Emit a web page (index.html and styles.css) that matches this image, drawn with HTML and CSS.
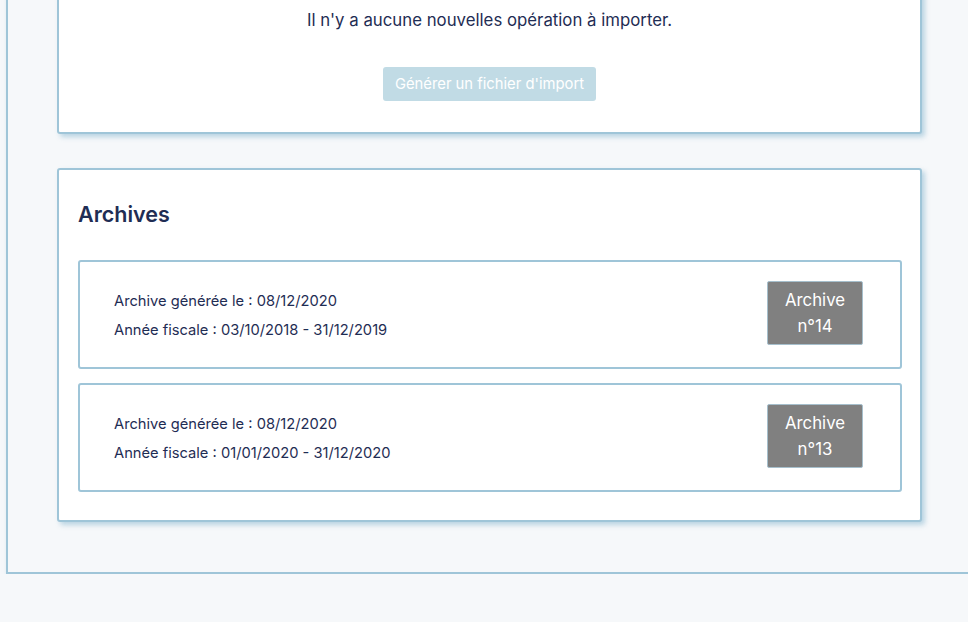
FILE: index.html
```html
<!DOCTYPE html>
<html lang="fr">
<head>
<meta charset="utf-8">
<title>Import</title>
<link rel="stylesheet" href="styles.css">
</head>
<body>
<div class="page">
  <section class="card card-import">
    <p class="empty">Il n'y a aucune nouvelles opération à importer.</p>
    <div class="actions">
      <button class="btn-import" disabled>Générer un fichier d'import</button>
    </div>
  </section>

  <section class="card card-archives">
    <h2 class="title">Archives</h2>
    <div class="archive-list">
      <div class="archive">
        <div class="archive-info">
          <p>Archive générée le : 08/12/2020</p>
          <p>Année fiscale : 03/10/2018 - 31/12/2019</p>
        </div>
        <div class="badge">Archive<br>n°14</div>
      </div>
      <div class="archive">
        <div class="archive-info">
          <p>Archive générée le : 08/12/2020</p>
          <p>Année fiscale : 01/01/2020 - 31/12/2020</p>
        </div>
        <div class="badge">Archive<br>n°13</div>
      </div>
    </div>
  </section>
</div>
</body>
</html>
```

FILE: styles.css
```css
html, body {
  margin: 0;
  padding: 0;
  background: #f6f8fa;
  overflow: hidden;
}
body {
  font-family: Inter, "Liberation Sans", sans-serif;
  color: #1f2d54;
}
.page {
  margin: -60px -12px 0 6px;
  border: 2px solid #9fc5d8;
  border-top: none;
  box-shadow: 2px 3px 5px rgba(159, 197, 216, 0.6);
  padding: 0 56px 50px 49px;
  display: flex;
  flex-direction: column;
  gap: 34px;
}
.card {
  background: #fff;
  border: 2px solid #9fc5d8;
  border-radius: 3px;
  box-shadow: 3px 3px 5px rgba(159, 197, 216, 0.7);
}
.card-import {
  border-top: none;
  padding: 69px 20px 31px;
  text-align: center;
}
.empty {
  margin: 0;
  font-size: 16.8px;
  line-height: 22px;
}
.actions {
  margin-top: 36px;
  display: flex;
  justify-content: center;
}
.btn-import {
  font-family: inherit;
  font-size: 14.8px;
  color: #fff;
  background: #c1dbe5;
  border: none;
  border-radius: 3px;
  padding: 0 12px;
  height: 34px;
  white-space: nowrap;
}
.card-archives {
  padding: 28px 18px 28px 19px;
}
.title {
  margin: 0 0 30px 0;
  font-size: 21.5px;
  font-weight: 600;
  line-height: 32px;
}
.archive-list {
  display: flex;
  flex-direction: column;
  gap: 14px;
}
.archive {
  border: 2px solid #9fc5d8;
  border-radius: 3px;
  padding: 19px 37px 22px 34px;
  display: flex;
  justify-content: space-between;
  align-items: center;
}
.archive-info {
  padding-top: 6px;
}
.archive-info p {
  margin: 0;
  font-size: 14.7px;
  line-height: 29px;
}
.badge {
  width: 94px;
  background: #808080;
  border: 1px solid #a6bfcc;
  border-radius: 2px;
  color: #fff;
  font-size: 16.8px;
  line-height: 26px;
  text-align: center;
  padding: 5px 0;
}
```
